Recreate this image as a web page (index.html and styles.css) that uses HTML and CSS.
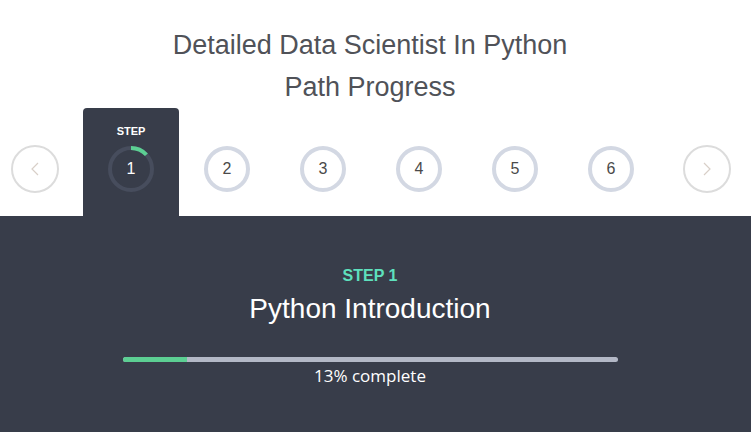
FILE: index.html
```html
<!DOCTYPE html>
<html>
<head>
<meta charset="utf-8">
<link rel="stylesheet" href="styles.css">
</head>
<body>
<div class="page">
  <header class="head">
    <h1 class="title">Detailed Data Scientist In Python<br>Path Progress</h1>
  </header>
  <nav class="steps">
    <div class="arrow arrow-left">
      <svg width="16" height="16" viewBox="0 0 16 16"><path d="M11 2 L5 8 L11 14" fill="none" stroke="#d8cfc8" stroke-width="1.2"/></svg>
    </div>
    <div class="step active">
      <div class="step-label">STEP</div>
      <div class="ring-wrap">
        <svg class="ring-svg" width="46" height="46" viewBox="0 0 46 46">
          <circle cx="23" cy="23" r="21" fill="none" stroke="#474d5d" stroke-width="4"/>
          <circle cx="23" cy="23" r="21" fill="none" stroke="#5ccf93" stroke-width="4" stroke-dasharray="17.2 200" transform="rotate(-90 23 23)"/>
        </svg>
        <span class="ring-num">1</span>
      </div>
    </div>
    <div class="step"><div class="ring">2</div></div>
    <div class="step"><div class="ring">3</div></div>
    <div class="step"><div class="ring">4</div></div>
    <div class="step"><div class="ring">5</div></div>
    <div class="step"><div class="ring">6</div></div>
    <div class="arrow arrow-right">
      <svg width="16" height="16" viewBox="0 0 16 16"><path d="M5 2 L11 8 L5 14" fill="none" stroke="#d8cfc8" stroke-width="1.2"/></svg>
    </div>
  </nav>
  <section class="detail">
    <div class="detail-step">STEP 1</div>
    <h2 class="detail-title">Python Introduction</h2>
    <div class="bar"><div class="bar-fill" style="width:13%"></div></div>
    <div class="bar-text">13% complete</div>
  </section>
</div>
</body>
</html>
```
FILE: styles.css
```css
* { box-sizing: border-box; }
html, body { margin: 0; padding: 0; background: #fff; }
body { width: 751px; height: 432px; overflow: hidden; font-family: "Liberation Sans", Arial, sans-serif; }
.page { display: flex; flex-direction: column; height: 432px; width: 751px; }
.head { padding-top: 24px; width: 740px; text-align: center; }
.title {
  margin: 0;
  font-family: "Liberation Sans", sans-serif;
  font-weight: 400;
  font-size: 27px;
  line-height: 42px;
  color: #505258;
}
.steps {
  display: flex;
  align-items: flex-end;
  justify-content: center;
  width: 740px;
  height: 108px;
  padding-left: 2px;
}
.arrow {
  width: 48px;
  height: 48px;
  border: 2px solid #dcdcdc;
  border-radius: 50%;
  display: flex;
  align-items: center;
  justify-content: center;
  margin-bottom: 23px;
}
.arrow-left { margin-right: 24px; }
.arrow-right { margin-left: 24px; }
.step {
  width: 96px;
  height: 108px;
  display: flex;
  flex-direction: column;
  align-items: center;
  justify-content: flex-end;
  padding-bottom: 24px;
}
.step.active {
  background: #383d4a;
  border-radius: 4px 4px 0 0;
  justify-content: flex-start;
  padding-top: 17px;
}
.step-label {
  color: #fff;
  font-weight: 700;
  font-size: 11px;
  line-height: 13px;
  margin-bottom: 8px;
}
.ring-wrap { position: relative; width: 46px; height: 46px; }
.ring-svg { display: block; }
.ring-num {
  position: absolute; inset: 0;
  display: flex; align-items: center; justify-content: center;
  color: #fff; font-size: 16px;
}
.ring {
  width: 46px; height: 46px;
  border: 4px solid #d3d8e3;
  border-radius: 50%;
  display: flex; align-items: center; justify-content: center;
  color: #4a4a4a; font-size: 16px;
}
.detail {
  flex: 1;
  background: #383d4a;
  display: flex;
  flex-direction: column;
  align-items: center;
  padding-top: 50px;
  padding-right: 11px;
}
.detail-step {
  color: #5ee0bd;
  font-weight: 700;
  font-size: 16px;
  line-height: 20px;
}
.detail-title {
  margin: 6px 0 0;
  color: #fff;
  font-weight: 400;
  font-size: 28px;
  line-height: 34px;
}
.bar {
  margin-top: 31px;
  width: 495px;
  height: 5px;
  border-radius: 3px;
  background: #b3b8c6;
  overflow: hidden;
}
.bar-fill { height: 100%; background: #5ccf93; }
.bar-text {
  margin-top: 3px;
  color: #fff;
  font-family: "Open Sans", sans-serif;
  font-size: 17px;
  line-height: 22px;
}
```
